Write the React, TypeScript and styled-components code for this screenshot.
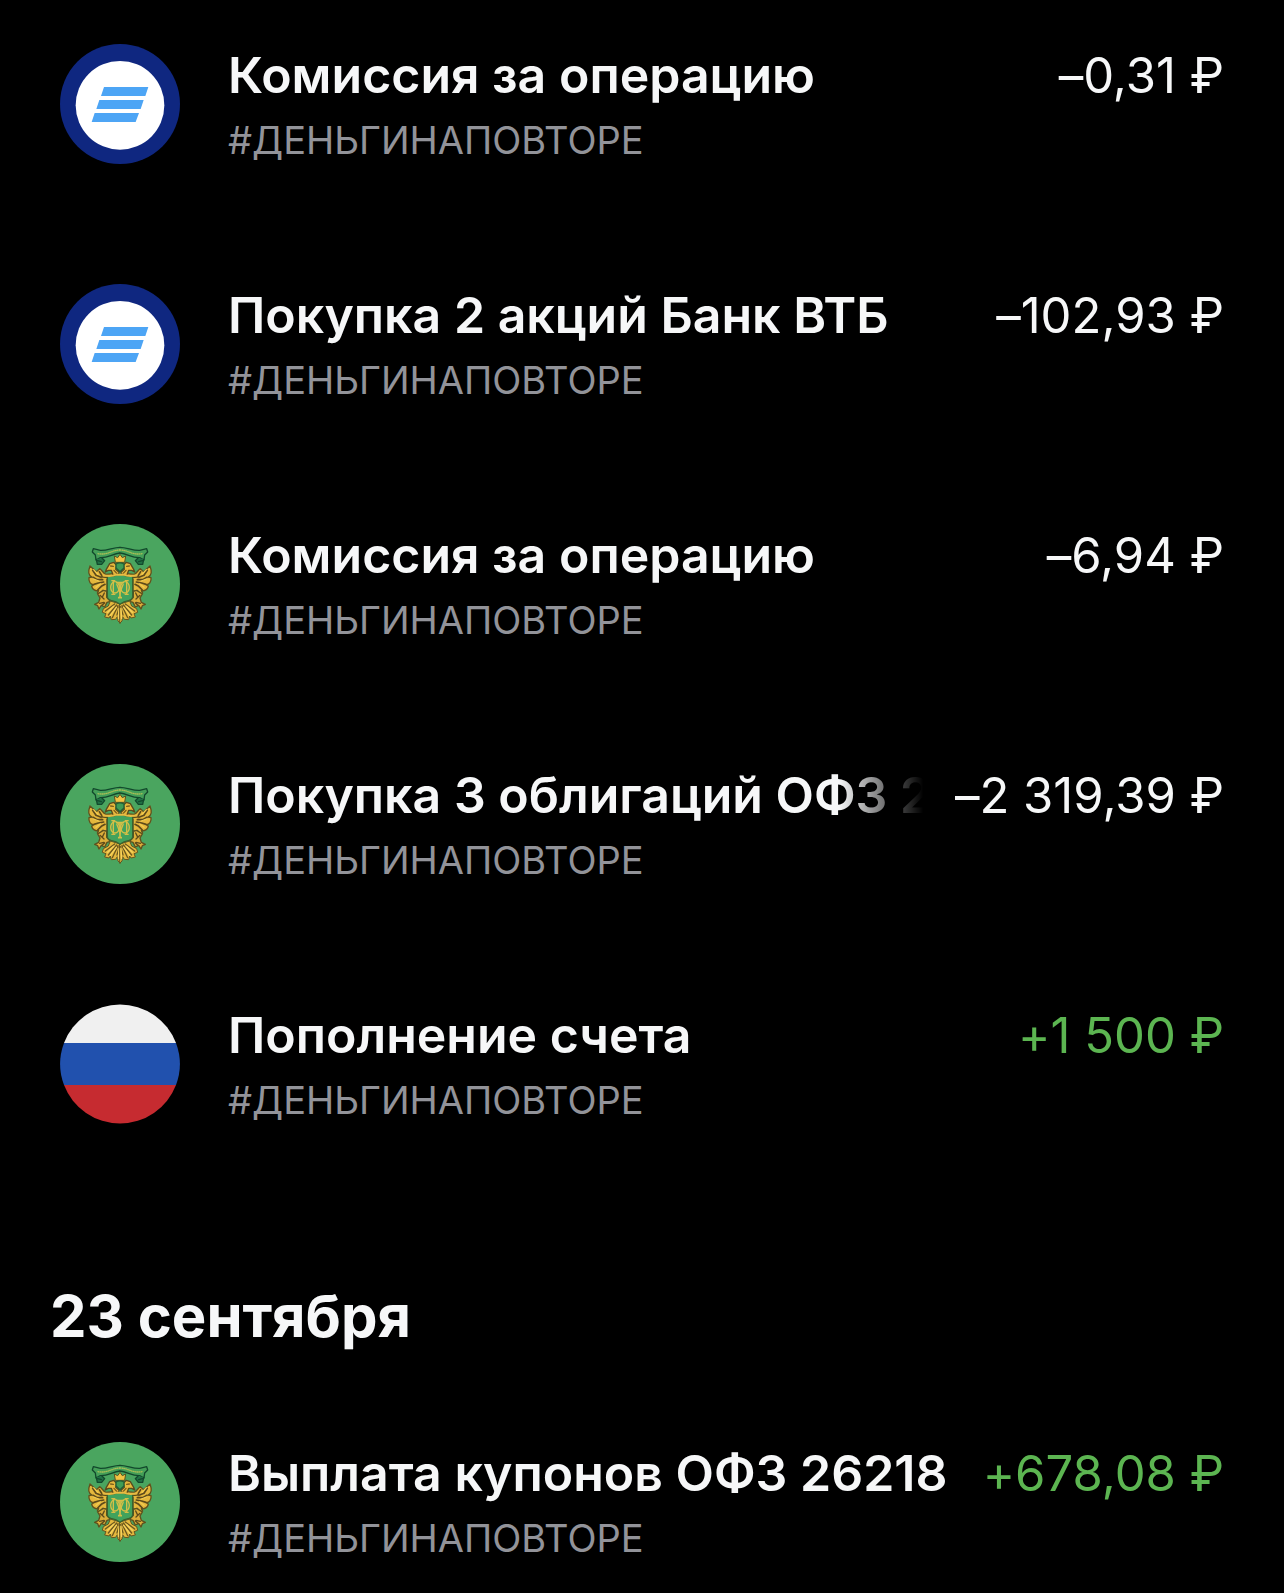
import styled, { createGlobalStyle } from "styled-components"

type Logo = "vtb" | "ofz" | "rub"

interface Operation {
  id: number
  logo: Logo
  title: string
  account: string
  amount: string
  income?: boolean
  long?: boolean
}

const GlobalStyle = createGlobalStyle`
  body {
    margin: 0;
    background-color: #000000;
    color: #f6f7f8;
    font-family: Inter, "Liberation Sans", sans-serif;
  }
`

const Page = styled.main`
  padding: 44px 60px 28px;
`

const OperationList = styled.ul`
  display: flex;
  flex-direction: column;
  gap: 120px;
  margin: 0;
  padding: 0;
  list-style: none;
`

const OperationRow = styled.li`
  display: flex;
  align-items: flex-start;
  gap: 48px;
`

const Avatar = styled.svg`
  display: block;
  flex: none;
  width: 120px;
  height: 120px;
`

const Details = styled.div`
  flex: 1;
  min-width: 0;
`

const TitleLine = styled.div`
  display: flex;
  align-items: baseline;
  justify-content: space-between;
  gap: 28px;
  height: 62px;
  line-height: 62px;
  white-space: nowrap;
`

const Title = styled.span<{ $faded?: boolean }>`
  min-width: 0;
  overflow: hidden;
  font-size: 50px;
  font-weight: 600;
  ${props =>
    props.$faded &&
    "mask-image: linear-gradient(to left, transparent 4px, #000000 88px);"}
`

const Amount = styled.span<{ $income?: boolean }>`
  flex: none;
  color: ${props => (props.$income ? "#5cb551" : "inherit")};
  font-size: 49px;
  font-variant-ligatures: no-contextual;
`

const Account = styled.p`
  margin: 10px 0 0;
  color: #929399;
  font-size: 38px;
  line-height: 48px;
`

const DateHeading = styled.h2`
  margin: 156px -10px 90px;
  font-size: 58px;
  line-height: 72px;
  font-weight: 700;
`

const VtbLogo = () => (
  <Avatar viewBox="0 0 360 360" aria-hidden="true">
    <circle cx="180" cy="180" r="180" fill="#0f2780" />
    <circle cx="180" cy="184" r="133" fill="#ffffff" />
    <g fill="#4da5f5">
      <path d="M132 129H265L256 156H123Z" />
      <path d="M118 168H251L242 195H109Z" />
      <path d="M104 207H237L227 234H95Z" />
    </g>
  </Avatar>
)

const EagleHalf = () => (
  <g strokeLinejoin="round" strokeLinecap="round">
    {/* ribbon */}
    <path
      d="M180 70C160 70 142 80 121 79L100 74L97 84L106 93L108 108L121 101C145 102 158 89 180 87"
      fill="#449f58"
      stroke="#12482c"
      strokeWidth="4"
    />
    <path
      d="M109 106L112 121L125 121L134 110L126 102M113 110L124 113"
      fill="#207345"
      stroke="#12482c"
      strokeWidth="4"
    />
    <path d="M114 89C143 94 154 79 180 78" fill="none" stroke="#a9bd55" strokeWidth="4" strokeDasharray="2 4" />
    {/* wing */}
    <path
      d="M90 126C84 142 86 155 96 159L87 161C85 173 92 181 101 182L95 187C97 196 106 202 116 200L112 207C119 211 126 205 128 199L141 202V166L166 157L162 149L137 151C128 146 125 137 119 134L109 143Z"
      fill="#e5b73c"
      stroke="#62511d"
      strokeWidth="4"
    />
    <path
      d="M98 139L108 154L123 160M99 160L112 167L128 167M102 181L115 177L131 174M113 198L124 187L135 181M118 143L128 159L145 160"
      fill="none"
      stroke="#5d4a1b"
      strokeWidth="5"
    />
    <path d="M101 137L114 151M101 165L116 171M108 190L121 180" fill="none" stroke="#f2cc51" strokeWidth="4" />
    {/* head and neck */}
    <path
      d="M142 131L149 119L161 115L170 124L167 136L177 145L174 157L160 155L154 139L145 139L136 144L139 136Z"
      fill="#e6b83c"
      stroke="#5a4b1d"
      strokeWidth="4"
    />
    <path d="M152 126L160 127M162 139L171 149" stroke="#7a5d1c" strokeWidth="4" />
    {/* claw */}
    <path
      d="M130 199L140 202V220L151 232L141 235L134 249L124 244L117 255L113 245L104 241L116 235L120 222L113 210Z"
      fill="#dcae3a"
      stroke="#5d501e"
      strokeWidth="4"
    />
    <path d="M120 214L132 225M119 238L132 235M133 207L128 217M126 244L134 237" fill="none" stroke="#5d4a1b" strokeWidth="4" />
    {/* tail */}
    <path
      d="M180 240L151 231L145 246L130 254L127 265L138 269L134 279L147 282L151 276L154 287L167 286L172 278L174 291L180 297Z"
      fill="#e5b93e"
      stroke="#655520"
      strokeWidth="3"
    />
    <path
      d="M170 243L145 273M174 245L157 281M178 248L171 273M164 240L136 261"
      fill="none"
      stroke="#6b581f"
      strokeWidth="4"
    />
    <path d="M169 250L151 274M161 247L143 265M177 253L175 283" fill="none" stroke="#f7d35b" strokeWidth="4" />
  </g>
)

const OfzLogo = () => (
  <Avatar viewBox="0 0 360 360" aria-hidden="true">
    <circle cx="180" cy="180" r="180" fill="#4aa55f" />
    <EagleHalf />
    <g transform="translate(360 0) scale(-1 1)">
      <EagleHalf />
    </g>
    {/* crown */}
    <path d="M166 115L163 96L173 101L180 91L187 101L197 96L194 115Z" fill="#f3c443" stroke="#59501e" strokeWidth="3" />
    <path d="M168 120Q180 113 192 120V132L180 143L168 132Z" fill="#3f9c55" stroke="#235c35" strokeWidth="4" />
    {/* shield */}
    <path
      d="M142 156Q161 158 171 152H189Q199 158 218 156V217Q218 227 207 229Q191 231 180 241Q169 231 153 229Q142 227 142 217Z"
      fill="#42a25c"
      stroke="#3b612d"
      strokeWidth="4"
    />
    <path d="M128 154Q154 159 169 152H191Q206 159 232 154" fill="none" stroke="#e8bc43" strokeWidth="6" />
    <g fill="none" stroke="#d4bf47" strokeWidth="4">
      <path d="M154 170H166M194 170H206M160 170V211M200 170V211M154 211H166M194 211H206M170 180L180 205L190 180" />
      <path d="M168 176H192M180 176V221M174 221H186" strokeWidth="5" />
      <ellipse cx="165" cy="190" rx="13" ry="17" />
      <ellipse cx="195" cy="190" rx="13" ry="17" />
    </g>
  </Avatar>
)

const RubLogo = () => (
  <Avatar viewBox="0 0 360 360" aria-hidden="true">
    <path d="M12 117A180 180 0 0 1 348 117Z" fill="#f0f0f0" />
    <path d="M12 117H348A180 180 0 0 1 348 243H12A180 180 0 0 1 12 117Z" fill="#2151ae" />
    <path d="M12 243H348A180 180 0 0 1 12 243Z" fill="#c62b30" />
  </Avatar>
)

const logos = {
  vtb: VtbLogo,
  ofz: OfzLogo,
  rub: RubLogo,
}

const account = "#ДЕНЬГИНАПОВТОРЕ"

const recent: Operation[] = [
  { id: 1, logo: "vtb", title: "Комиссия за операцию", account, amount: "–0,31 ₽" },
  { id: 2, logo: "vtb", title: "Покупка 2 акций Банк ВТБ", account, amount: "–102,93 ₽" },
  { id: 3, logo: "ofz", title: "Комиссия за операцию", account, amount: "–6,94 ₽" },
  { id: 4, logo: "ofz", title: "Покупка 3 облигаций ОФЗ 2", account, amount: "–2 319,39 ₽", long: true },
  { id: 5, logo: "rub", title: "Пополнение счета", account, amount: "+1 500 ₽", income: true },
]

const september23: Operation[] = [
  { id: 6, logo: "ofz", title: "Выплата купонов ОФЗ 26218", account, amount: "+678,08 ₽", income: true },
]

const Operations = ({ items }: { items: Operation[] }) => (
  <OperationList>
    {items.map(item => {
      const LogoIcon = logos[item.logo]
      return (
        <OperationRow key={item.id}>
          <LogoIcon />
          <Details>
            <TitleLine>
              <Title $faded={item.long}>{item.title}</Title>
              <Amount $income={item.income}>{item.amount}</Amount>
            </TitleLine>
            <Account>{item.account}</Account>
          </Details>
        </OperationRow>
      )
    })}
  </OperationList>
)

const App = () => (
  <>
    <GlobalStyle />
    <Page>
      <Operations items={recent} />
      <DateHeading>23 сентября</DateHeading>
      <Operations items={september23} />
    </Page>
  </>
)

export default App
